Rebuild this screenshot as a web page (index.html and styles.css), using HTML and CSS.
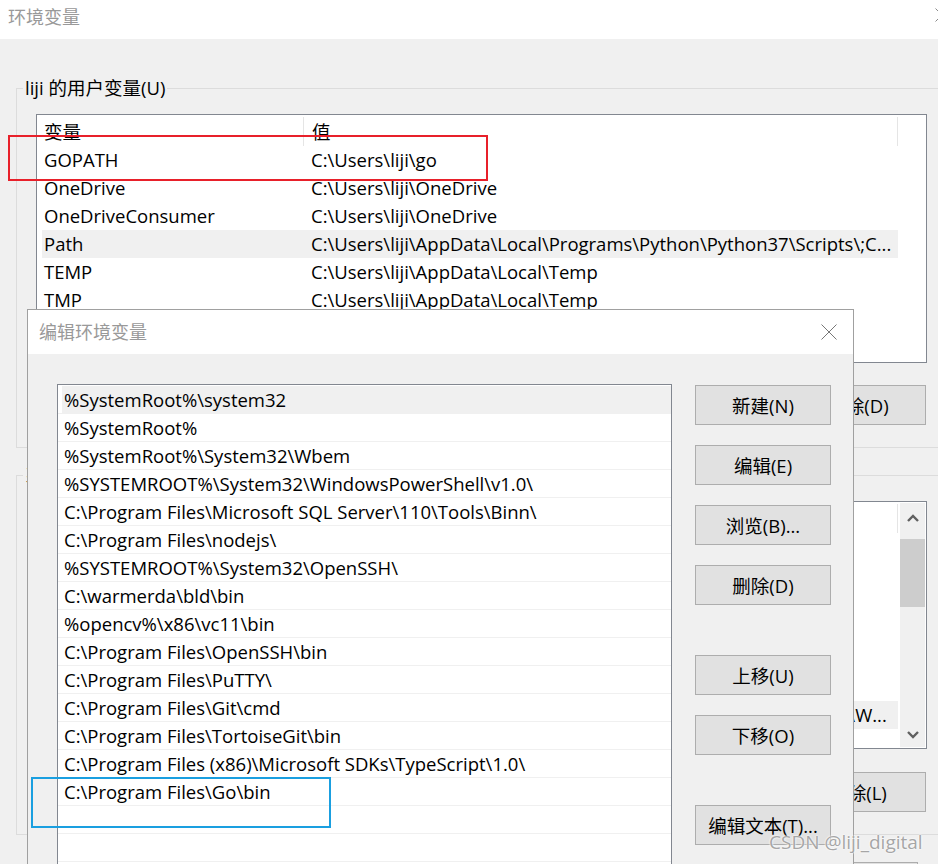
FILE: index.html
```html
<!DOCTYPE html>
<html lang="zh-CN">
<head>
  <meta charset="UTF-8">
  <title>环境变量</title>
  <link rel="stylesheet" href="styles.css">
</head>
<body>

<div class="window">
  <div class="titlebar">
    <span class="title">环境变量</span>
    <svg class="close" width="14" height="14" viewBox="0 0 14 14"><path d="M0.5 0.5 L13.5 13.5 M13.5 0.5 L0.5 13.5" stroke="#8a8a8a" stroke-width="1" fill="none"/></svg>
  </div>

  <div class="win-body">
    <fieldset class="group">
      <legend>liji 的用户变量(U)</legend>
      <div class="listview">
        <div class="lv-head">
          <div class="col1">变量</div>
          <div class="col2">值</div>
        </div>
        <div class="lv-row"><div class="col1">GOPATH</div><div class="col2">C:\Users\liji\go</div></div>
        <div class="lv-row"><div class="col1">OneDrive</div><div class="col2">C:\Users\liji\OneDrive</div></div>
        <div class="lv-row"><div class="col1">OneDriveConsumer</div><div class="col2">C:\Users\liji\OneDrive</div></div>
        <div class="lv-row selected"><div class="col1">Path</div><div class="col2">C:\Users\liji\AppData\Local\Programs\Python\Python37\Scripts\;C...</div></div>
        <div class="lv-row"><div class="col1">TEMP</div><div class="col2">C:\Users\liji\AppData\Local\Temp</div></div>
        <div class="lv-row"><div class="col1">TMP</div><div class="col2">C:\Users\liji\AppData\Local\Temp</div></div>
      </div>
      <div class="btn-row">
        <button class="btn">新建(N)...</button>
        <button class="btn">编辑(E)...</button>
        <button class="btn">删除(D)</button>
      </div>
    </fieldset>

    <fieldset class="group sys">
      <legend>系统变量(S)</legend>
      <div class="listview sys-list">
        <div class="lv-content">
          <div class="lv-head">
            <div class="col1">变量</div>
            <div class="col2">值</div>
          </div>
          <div class="lv-row"><div class="col1">ComSpec</div><div class="col2">C:\WINDOWS\system32\cmd.exe</div></div>
          <div class="lv-row"><div class="col1">DriverData</div><div class="col2">C:\Windows\System32\Drivers\DriverData</div></div>
          <div class="lv-row"><div class="col1">JAVA_HOME</div><div class="col2">C:\Program Files\Java\jdk1.8.0_201</div></div>
          <div class="lv-row"><div class="col1">NUMBER_OF_PROCESSORS</div><div class="col2">8</div></div>
          <div class="lv-row"><div class="col1">opencv</div><div class="col2">C:\opencv\build</div></div>
          <div class="lv-row"><div class="col1">OS</div><div class="col2">Windows_NT</div></div>
          <div class="lv-row selected"><div class="col1">Path</div><div class="col2">C:\WINDOWS\system32;C:\WINDOWS;C:\WINDOWS\System32;\W...</div></div>
          <div class="lv-row"><div class="col1">PATHEXT</div><div class="col2">.COM;.EXE;.BAT;.CMD;.VBS;.VBE;.JS;.JSE;.WSF;.WSH;.MSC</div></div>
        </div>
        <div class="scrollbar">
          <div class="sb-btn sb-up">
            <svg width="12" height="8" viewBox="0 0 12 8"><path d="M1 7 L6 2 L11 7" stroke="#606060" stroke-width="2.4" fill="none"/></svg>
          </div>
          <div class="sb-thumb"></div>
          <div class="sb-btn sb-down">
            <svg width="12" height="8" viewBox="0 0 12 8"><path d="M1 1 L6 6 L11 1" stroke="#606060" stroke-width="2.4" fill="none"/></svg>
          </div>
        </div>
      </div>
      <div class="btn-row">
        <button class="btn">新建(W)...</button>
        <button class="btn">编辑(I)...</button>
        <button class="btn">删除(L)</button>
      </div>
    </fieldset>

    <div class="btn-row footer">
      <button class="btn">确定</button>
      <button class="btn">取消</button>
    </div>
  </div>

  <!-- edit dialog on top -->
  <div class="dialog">
    <div class="titlebar dlg-titlebar">
      <span class="title">编辑环境变量</span>
      <svg class="close" width="16" height="16" viewBox="0 0 16 16"><path d="M0.5 0.5 L15.5 15.5 M15.5 0.5 L0.5 15.5" stroke="#777" stroke-width="1" fill="none"/></svg>
    </div>
    <div class="dlg-body">
      <div class="path-list">
        <div class="path-row selected"><span>%SystemRoot%\system32</span></div>
        <div class="path-row"><span>%SystemRoot%</span></div>
        <div class="path-row"><span>%SystemRoot%\System32\Wbem</span></div>
        <div class="path-row"><span>%SYSTEMROOT%\System32\WindowsPowerShell\v1.0\</span></div>
        <div class="path-row"><span>C:\Program Files\Microsoft SQL Server\110\Tools\Binn\</span></div>
        <div class="path-row"><span>C:\Program Files\nodejs\</span></div>
        <div class="path-row"><span>%SYSTEMROOT%\System32\OpenSSH\</span></div>
        <div class="path-row"><span>C:\warmerda\bld\bin</span></div>
        <div class="path-row"><span>%opencv%\x86\vc11\bin</span></div>
        <div class="path-row"><span>C:\Program Files\OpenSSH\bin</span></div>
        <div class="path-row"><span>C:\Program Files\PuTTY\</span></div>
        <div class="path-row"><span>C:\Program Files\Git\cmd</span></div>
        <div class="path-row"><span>C:\Program Files\TortoiseGit\bin</span></div>
        <div class="path-row"><span>C:\Program Files (x86)\Microsoft SDKs\TypeScript\1.0\</span></div>
        <div class="path-row"><span>C:\Program Files\Go\bin</span></div>
        <div class="path-row"><span></span></div>
        <div class="path-row"><span></span></div>
        <div class="path-row"><span></span></div>
      </div>
      <div class="dlg-buttons">
        <button class="btn">新建(N)</button>
        <button class="btn">编辑(E)</button>
        <button class="btn">浏览(B)...</button>
        <button class="btn">删除(D)</button>
        <button class="btn spaced">上移(U)</button>
        <button class="btn">下移(O)</button>
        <button class="btn spaced">编辑文本(T)...</button>
      </div>
    </div>
  </div>

  <div class="mark red"></div>
  <div class="mark blue"></div>
  <div class="watermark">CSDN @liji_digital</div>
</div>

</body>
</html>
```

FILE: styles.css
```css
:root {
  --face: #f0f0f0;
  --list-border: #828790;
  --btn-bg: #e1e1e1;
  --btn-border: #adadad;
  --title-color: #999;
}

html, body {
  margin: 0;
  height: 100%;
  overflow: hidden;
}

body {
  background: var(--face);
  font-family: "Open Sans", "Noto Sans CJK SC", sans-serif;
  font-size: 18.5px;
  color: #000;
}

.window {
  position: relative;
  width: 960px;
  height: 864px;
  background: var(--face);
}

.titlebar {
  display: flex;
  justify-content: space-between;
  align-items: flex-start;
  height: 39px;
  padding: 0 11px 0 8px;
  box-sizing: border-box;
  background: #fff;
}

.title {
  font-size: 18px;
  line-height: 24px;
  margin-top: 5px;
  color: var(--title-color);
}

.titlebar .close {
  margin-top: 8px;
}

.win-body {
  padding-top: 37px;
}

/* group boxes */
.group {
  margin: 0 0 0 16px;
  padding: 0 0 22px 0;
  width: 931px;
  border: 1px solid #dcdcdc;
}

.group legend {
  margin-left: 6px;
  padding: 0 2px;
  line-height: 24px;
}

.group.sys {
  margin-top: 15px;
}

.listview {
  margin: 14px 0 0 19px;
  width: 891px;
  height: 249px;
  box-sizing: border-box;
  border: 1px solid var(--list-border);
  background: #fff;
  overflow: hidden;
}

.lv-head,
.lv-row {
  display: flex;
  white-space: nowrap;
  margin-left: 5px;
  width: 856px;
}

.lv-head {
  height: 31px;
  align-items: center;
}

.lv-head .col1,
.lv-head .col2 {
  height: 29px;
  line-height: 29px;
  margin-top: 2px;
}

.lv-head .col1 {
  border-right: 1px solid #e5e5e5;
}

.lv-head .col2 {
  border-right: 1px solid #e5e5e5;
}

.lv-row {
  height: 28px;
  line-height: 28px;
}

.lv-row.selected {
  background: var(--face);
}

.col1 {
  width: 259px;
  padding-left: 2px;
  overflow: hidden;
}

.col2 {
  flex: 1;
  padding-left: 8px;
  overflow: hidden;
}

.sys-list {
  display: flex;
  height: 248px;
}

.lv-content {
  flex: 1;
}

.scrollbar {
  width: 25px;
  margin: 1px 1px 1px 0;
  background: var(--face);
  display: flex;
  flex-direction: column;
}

.sb-btn {
  display: flex;
  justify-content: center;
  align-items: center;
}

.sb-up {
  height: 30px;
}

.sb-thumb {
  margin-top: 6px;
  height: 68px;
  background: #cdcdcd;
}

.sb-down {
  margin-top: auto;
  height: 25px;
}

.btn-row {
  display: flex;
  justify-content: flex-end;
  gap: 14px;
  width: 890px;
  margin: 22px 0 0 19px;
}

.btn {
  width: 136px;
  height: 40px;
  padding: 0;
  background: var(--btn-bg);
  border: 1px solid var(--btn-border);
  font: inherit;
  color: #000;
}

.sys .btn-row {
  margin-top: 23px;
}

.btn-row.footer {
  width: auto;
  margin: 27px 42px 0 0;
}

/* edit dialog */
.dialog {
  position: absolute;
  left: 27px;
  top: 309px;
  width: 827px;
  height: 600px;
  box-sizing: border-box;
  border: 1px solid #a0a0a0;
  background: var(--face);
}

.dlg-titlebar {
  height: 44px;
  align-items: center;
  padding: 0 16px 0 11px;
}

.dlg-titlebar .title,
.dlg-titlebar .close {
  margin-top: 0;
}

.dlg-body {
  display: flex;
  align-items: flex-start;
  padding: 30px 0 0 29px;
}

.path-list {
  width: 615px;
  height: 520px;
  box-sizing: border-box;
  border: 1px solid var(--list-border);
  padding-top: 1px;
  background: #fff;
  overflow: hidden;
}

.path-row {
  height: 28px;
  box-sizing: border-box;
  padding-left: 4px;
  border-bottom: 1px solid #f0f0f0;
  line-height: 27px;
  white-space: nowrap;
}

.path-row span {
  display: block;
  height: 27px;
  padding-left: 2px;
}

.path-row.selected span {
  background: var(--face);
}

.dlg-buttons {
  display: flex;
  flex-direction: column;
  gap: 20px;
  margin: 1px 0 0 23px;
}

.dlg-buttons .spaced {
  margin-top: 30px;
}

/* annotations drawn over the screenshot */
.mark {
  position: absolute;
  box-sizing: border-box;
  border: 2px solid;
}

.mark.red {
  left: 8px;
  top: 135px;
  width: 480px;
  height: 46px;
  border-color: #e8202a;
}

.mark.blue {
  left: 31px;
  top: 777px;
  width: 300px;
  height: 51px;
  border-color: #1a9fe0;
}

.watermark {
  position: absolute;
  left: 769px;
  top: 829px;
  font-size: 19px;
  line-height: 26px;
  color: #a6a6a6;
  text-shadow: 0 0 2px #fff, 0 0 2px #fff;
  white-space: nowrap;
}
```
